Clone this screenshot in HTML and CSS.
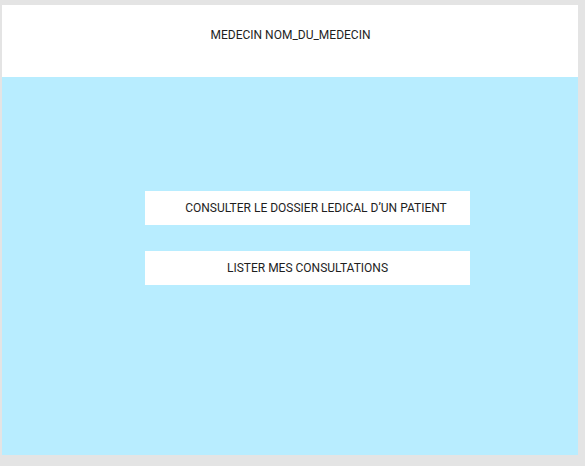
FILE: index.html
```html
<!DOCTYPE html>
<html lang="fr">
<head>
<meta charset="utf-8">
<title>Médecin</title>
<link rel="stylesheet" href="styles.css">
</head>
<body>
<div class="frame">
  <header class="header">MEDECIN NOM_DU_MEDECIN</header>
  <main class="content">
    <button class="btn btn-first">CONSULTER LE DOSSIER LEDICAL D’UN PATIENT</button>
    <button class="btn">LISTER MES CONSULTATIONS</button>
  </main>
</div>
</body>
</html>
```

FILE: styles.css
```css
html, body {
  margin: 0;
  padding: 0;
}
body {
  background: #e4e4e4;
  width: 585px;
  height: 466px;
  overflow: hidden;
  font-family: Roboto, "Liberation Sans", sans-serif;
  color: #1e1e1e;
}
.frame {
  margin: 5px 0 0 2px;
  width: 576px;
  display: flex;
  flex-direction: column;
}
.header {
  background: #ffffff;
  height: 72px;
  box-sizing: border-box;
  padding-top: 23px;
  text-align: center;
  font-size: 12px;
  line-height: 14px;
  padding-left: 1px;
}
.content {
  background: #b8edff;
  height: 378px;
  box-sizing: border-box;
  padding: 114px 0 0 143px;
  display: flex;
  flex-direction: column;
  gap: 26px;
}
.btn {
  width: 325px;
  height: 34px;
  border: none;
  background: #ffffff;
  font-family: Roboto, "Liberation Sans", sans-serif;
  font-size: 12px;
  color: #1e1e1e;
  text-align: center;
  padding: 0;
  margin: 0;
}
.btn-first {
  padding-left: 17px;
}
```
